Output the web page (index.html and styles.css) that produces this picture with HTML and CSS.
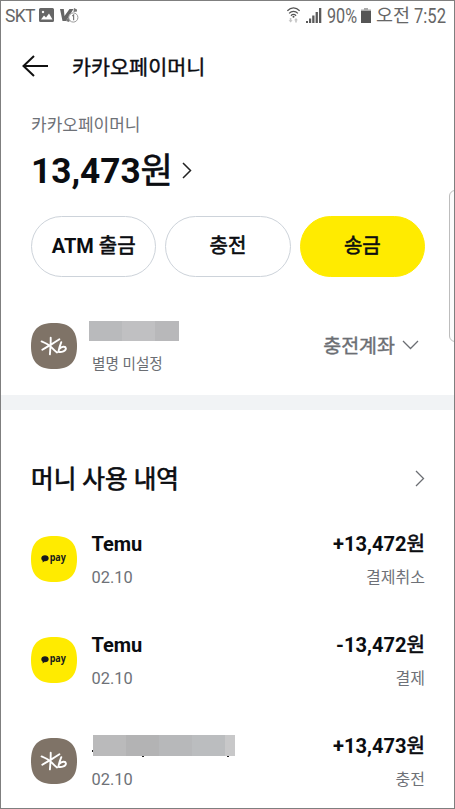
FILE: index.html
```html
<!DOCTYPE html>
<html lang="ko">
<head>
<meta charset="utf-8">
<title>카카오페이머니</title>
<link rel="stylesheet" href="styles.css">
</head>
<body>
<div class="screen">
  <div class="status">
    <span class="carrier">SKT</span>
    <svg class="s-img" width="15" height="14" viewBox="0 0 15 14"><path fill="#666" fill-rule="evenodd" d="M1.500 0h12A1.500 1.500 0 0 1 15 1.500v11a1.500 1.500 0 0 1-1.500 1.500h-12A1.500 1.500 0 0 1 0 12.500v-11A1.500 1.500 0 0 1 1.500 0ZM2 11.500h11.500L10 5.500 7 9.500 5 7.500ZM4 2.800a1.200 1.200 0 1 0 .01 0Z"/></svg>
    <svg class="s-v" width="19" height="16" viewBox="0 0 19 16"><path fill="#666" d="M0 1h3.800l.7 7L9.500 1h4L6 13H2.500Z"/><path fill="#777" d="M6 13l5-8 2 2-4 7ZM14 0l3 1.500 0 2-3.500.5Z"/><circle cx="13.300" cy="9.500" r="4.600" fill="#fff" stroke="#999"/><path d="M12.300 8l1.300-1v5.300" fill="none" stroke="#777" stroke-width="1.200"/></svg>
    <span class="grow"></span>
    <svg class="s-wifi" width="13" height="17" viewBox="0 0 13 17"><g fill="none" stroke="#555" stroke-width="1.200"><path d="M.4 3.800C4-.1 9-.1 12.600 3.800M2.100 6.300c2.600-2.700 6.200-2.700 8.800 0M3.900 8.700c1.600-1.500 3.600-1.500 5.200 0"/></g><circle cx="6.500" cy="9.800" r="1" fill="#555"/><path fill="#c4c4c4" d="M2.800 11h1.600v2.300h1.200l-2 2.200-2-2.200h1.200ZM8.200 15.500v-2.300H7l2-2.200 2 2.200H9.800v2.300Z"/></svg>
    <svg class="s-signal" width="16" height="15" viewBox="0 0 16 15"><path fill="#5a5a5a" d="M0 13h2v2H0ZM3 10.500h2.200V15H3ZM6.200 7.500h2.300V15H6.200ZM9.600 4h2.300v11H9.600ZM13 0h2.300v15H13Z"/></svg>
    <span class="battery-text"><span class="narrow">90%</span></span>
    <svg class="s-bat" width="10" height="15" viewBox="0 0 10 15"><path fill="#aaa" d="M3 0h4v1.500h3V4H0V1.500h3Z"/><path fill="#555" d="M0 3h10v12H0Z"/></svg>
    <span class="ampm">오전</span>
    <span class="clock"><span class="narrow">7:52</span></span>
  </div>

  <header class="nav">
    <svg width="27" height="22" viewBox="0 0 27 22"><path d="M12 1L1.500 11 12 21M1.500 11H26" fill="none" stroke="#111" stroke-width="2"/></svg>
    <h1>카카오페이머니</h1>
  </header>

  <section class="balance">
    <div class="label">카카오페이머니</div>
    <div class="total"><span>13,473<span class="ko">원</span></span><svg width="10" height="17" viewBox="0 0 10 17"><path d="M1 1l7.500 7.500L1 16" fill="none" stroke="#222" stroke-width="1.500"/></svg></div>
    <div class="actions">
      <button>ATM <span class="ko">출금</span></button>
      <button><span class="ko">충전</span></button>
      <button class="primary"><span class="ko">송금</span></button>
    </div>
  </section>

  <section class="account">
    <svg class="logo" viewBox="0 0 46 46"><path class="kb-bg" d="M23 0C39 0 46 7 46 23S39 46 23 46 0 39 0 23 7 0 23 0Z"/><path class="kb-line" d="M19.700 14.800C19.900 20 19.300 26 18.900 31.400M10.600 18.400C15 20.300 18 22 19.500 23.300C21 24.800 23.500 27.800 26 29.500M28.400 16.200C23 20 17 23.200 11.300 26.800M30.300 19.200C29 22.500 27.800 26 27.400 28.800C30.500 29.400 35 28.200 34.900 25.300C34.600 23 30.500 23.400 28.400 26"/></svg>
    <div class="account-info">
      <div class="mask"><i class="m1"></i><i class="m2"></i><i class="m3"></i></div>
      <div class="alias">별명 미설정</div>
    </div>
    <div class="account-type">충전계좌</div>
    <svg class="down" width="17" height="10" viewBox="0 0 17 10"><path d="M1 1l7.500 7.500L16 1" fill="none" stroke="#6b6e73" stroke-width="1.300"/></svg>
  </section>

  <div class="divider"></div>

  <div class="history-head">
    <h2>머니 사용 내역</h2>
    <svg width="10" height="17" viewBox="0 0 10 17"><path d="M1 1l7.500 7.500L1 16" fill="none" stroke="#6b6e73" stroke-width="1.300"/></svg>
  </div>

  <div class="item">
    <svg class="logo" viewBox="0 0 46 46"><path class="pay-bg" d="M23 0C39 0 46 7 46 23S39 46 23 46 0 39 0 23 7 0 23 0Z"/><path class="pay-ink" d="M14 19.200c2.100 0 3.700 1.300 3.700 3s-1.600 3-3.700 3h-.7l-1.700 1.300.2-1.700c-.9-.5-1.500-1.500-1.500-2.600 0-1.700 1.600-3 3.700-3Z"/><text class="pay-ink pay-text" x="18.700" y="25" textLength="16.200" lengthAdjust="spacingAndGlyphs">pay</text></svg>
    <div class="left"><div class="name">Temu</div><div class="date">02.10</div></div>
    <div class="right"><div class="amount">+13,472<span class="ko">원</span></div><div class="kind">결제취소</div></div>
  </div>
  <div class="item">
    <svg class="logo" viewBox="0 0 46 46"><path class="pay-bg" d="M23 0C39 0 46 7 46 23S39 46 23 46 0 39 0 23 7 0 23 0Z"/><path class="pay-ink" d="M14 19.200c2.100 0 3.700 1.300 3.700 3s-1.600 3-3.700 3h-.7l-1.700 1.300.2-1.700c-.9-.5-1.500-1.500-1.500-2.600 0-1.700 1.600-3 3.700-3Z"/><text class="pay-ink pay-text" x="18.700" y="25" textLength="16.200" lengthAdjust="spacingAndGlyphs">pay</text></svg>
    <div class="left"><div class="name">Temu</div><div class="date">02.10</div></div>
    <div class="right"><div class="amount">-13,472<span class="ko">원</span></div><div class="kind">결제</div></div>
  </div>
  <div class="item">
    <svg class="logo" viewBox="0 0 46 46"><path class="kb-bg" d="M23 0C39 0 46 7 46 23S39 46 23 46 0 39 0 23 7 0 23 0Z"/><path class="kb-line" d="M19.700 14.800C19.900 20 19.300 26 18.900 31.400M10.600 18.400C15 20.300 18 22 19.500 23.300C21 24.800 23.500 27.800 26 29.500M28.400 16.200C23 20 17 23.200 11.300 26.800M30.300 19.200C29 22.500 27.800 26 27.400 28.800C30.500 29.400 35 28.200 34.900 25.300C34.600 23 30.500 23.400 28.400 26"/></svg>
    <div class="left"><div class="name"><div class="mask wide"><i class="w1"></i><i class="w2"></i><i class="w3"></i><i class="w4"></i><i class="w5"></i><b class="speck a"></b><b class="speck b"></b><b class="speck c"></b></div></div><div class="date">02.10</div></div>
    <div class="right"><div class="amount">+13,473<span class="ko">원</span></div><div class="kind">충전</div></div>
  </div>
  <div class="edge-handle"></div>
</div>
</body>
</html>
```
FILE: styles.css
```css
* { box-sizing: border-box; }
body { margin: 0; background: #fff; font-family: Roboto, "Noto Sans CJK KR", sans-serif; color: #0b0d11; }
svg { display: block; flex: none; }
h1, h2 { margin: 0; }
.screen { position: relative; width: 455px; height: 809px; border: 1px solid #7f7f7f; overflow: hidden; white-space: nowrap; }
.ko { font-weight: 400; -webkit-text-stroke: 0.6px currentColor; }

.status { display: flex; height: 30px; padding: 0 8px 0 4px; color: #666; line-height: 30px; }
.carrier { width: 34px; font-size: 17.5px; letter-spacing: -0.7px; }
.s-img { margin-top: 7px; }
.s-v { margin: 7px 0 0 6px; }
.grow { flex: 1; }
.s-wifi { margin: 6px 6px 0 0; }
.s-signal { margin: 7px 5px 0 0; }
.battery-text { width: 34px; font-size: 20px; }
.narrow { display: inline-block; transform: scaleX(0.81); transform-origin: left; }
.s-bat { margin: 7px 5px 0 0; }
.ampm { width: 38px; font-size: 18.5px; }
.clock { width: 32px; font-size: 20px; }
.clock .narrow { transform: scaleX(0.83); }

.nav { display: flex; align-items: center; height: 70px; padding-left: 21px; }
.nav h1 { margin: 4px 0 0 23px; font-size: 20.7px; font-weight: 400; line-height: 30px; -webkit-text-stroke: 0.4px currentColor; }

.balance { padding: 12px 29px 0 30px; }
.label { font-size: 17px; line-height: 24px; color: #6e7177; }
.total { display: flex; align-items: center; height: 44px; margin-top: 11px; font-size: 35.2px; font-weight: 700; line-height: 44px; }
.total > span { margin-top: 2px; }
.total svg { margin-left: 9px; }
.actions { display: grid; grid-template-columns: repeat(3, 1fr); gap: 9px; margin-top: 23.5px; }
.actions button { height: 61px; padding: 0; border: 1px solid #cdd3da; border-radius: 31px; background: #fff; font: 700 20px/59px Roboto, "Noto Sans CJK KR", sans-serif; color: #0b0d11; }
.actions .primary { border-color: #ffeb00; background: #ffeb00; }

.account { display: flex; height: 118.5px; padding: 45.5px 35px 0 30px; }
.logo { width: 46px; height: 46px; margin-top: 1px; }
.kb-bg { fill: #7f7367; }
.kb-line { fill: none; stroke: #fff; stroke-width: 1.9; stroke-linecap: round; stroke-linejoin: round; }
.pay-bg { fill: #ffeb00; }
.pay-ink { fill: #17191d; }
.pay-text { font: 700 9.8px "Open Sans", sans-serif; }
.account-info { flex: 1; margin-left: 12px; }
.mask { display: flex; width: 90px; height: 20px; margin-top: -1px; }
.m1 { width: 33px; background: #b9babc; }
.m2 { width: 33px; background: #c0c0c2; }
.m3 { width: 24px; background: #b8b8ba; }
.alias { margin: 12px 0 0 3px; font-size: 14.6px; line-height: 22px; color: #6b6e73; }
.account-type { margin-top: 11px; font-size: 19.5px; line-height: 28px; color: #6b6e73; -webkit-text-stroke: 0.4px currentColor; }
.down { margin: 18px 0 0 7px; }

.divider { height: 15px; background: #f1f3f5; }
.history-head { display: flex; align-items: center; justify-content: space-between; height: 117px; padding: 20px 29px 0 30px; }
.history-head h2 { margin-top: 3px; font-size: 24.6px; font-weight: 400; line-height: 36px; -webkit-text-stroke: 0.7px currentColor; }

.item { display: flex; height: 101px; padding: 3px 29px 0 30px; }
.item .logo { margin-top: 6px; }
.left { flex: 1; margin-left: 14.5px; }
.name, .amount { height: 28px; font-size: 20px; font-weight: 700; line-height: 28px; }
.amount { font-size: 20.1px; line-height: 29px; }
.date { margin-top: 6px; font-size: 16.4px; line-height: 27px; color: #6e7177; }
.right { text-align: right; }
.kind { margin-top: 6px; font-size: 16px; line-height: 27px; color: #6e7177; }
.wide { position: relative; top: 3px; width: 142px; height: 21px; margin: 0 0 0 1.5px; }
.w1 { width: 33px; background: #bababb; }
.w2 { width: 33px; background: #b3b3b4; }
.w3 { width: 33px; background: #b7b8ba; }
.w4 { width: 33px; background: #bbbdbf; }
.w5 { width: 10px; background: #c8c8c9; }
.speck { position: absolute; width: 2px; height: 1px; background: #222; }
.a { left: -1px; top: 15px; width: 1px; height: 2px; }
.b { left: 49px; top: 21px; }
.c { left: 134px; top: 21px; }

.edge-handle { position: absolute; left: 448px; top: 189px; width: 20px; height: 152px; border: 1px solid #bdbdbd; border-radius: 6px; background: #fcfcfc; }
```
